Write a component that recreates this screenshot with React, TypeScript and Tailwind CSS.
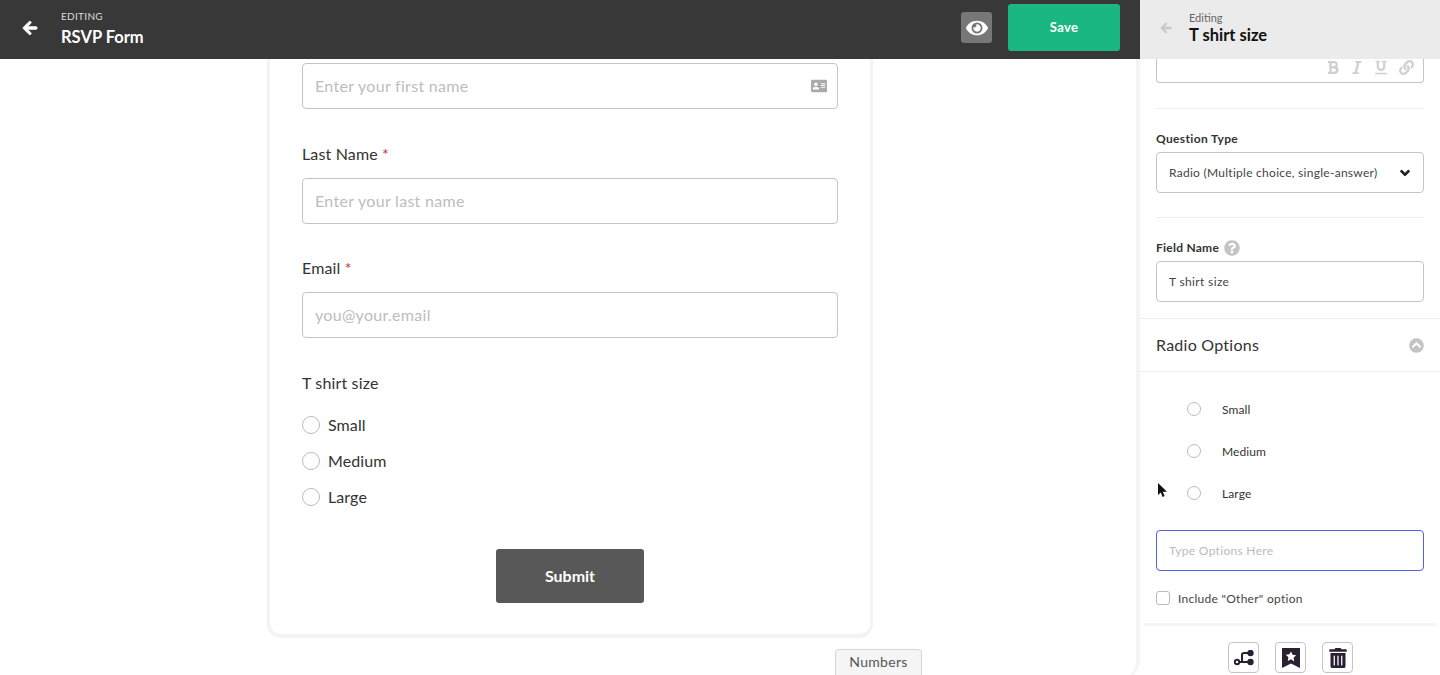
import { FaArrowLeft, FaEye, FaBold, FaItalic, FaUnderline, FaLink, FaChevronDown, FaQuestionCircle, FaChevronCircleUp, FaAddressCard, FaTrashAlt } from 'react-icons/fa';

function TextField({ label, required, placeholder, icon }: { label?: string; required?: boolean; placeholder: string; icon?: boolean }) {
  return (
    <div>
      {label && (
        <div className="mb-[14px] text-[16px] leading-[20px] tracking-[0.15px] text-[#333]">
          {label} {required && <span className="text-[#d0312d]">*</span>}
        </div>
      )}
      <div className="flex h-[46px] items-center justify-between rounded-[4px] border border-[#c4c4c4] pl-3 pr-[10px] text-[16px] tracking-[0.3px] text-[#bdbdbd]">
        <span>{placeholder}</span>
        {icon && <FaAddressCard className="h-[16px] w-[16px] text-[#aaa]" />}
      </div>
    </div>
  );
}

function Radio({ label }: { label: string }) {
  return (
    <div className="flex h-[36px] items-center gap-2 text-[16px] tracking-[0.1px] text-[#333]">
      <span className="h-[18px] w-[18px] rounded-full border border-[#bbb]" />
      {label}
    </div>
  );
}

function SideOption({ label }: { label: string }) {
  return (
    <div className="flex h-[42px] items-center pl-[31px] text-[12px] tracking-[0.1px] text-[#333]">
      <span className="mr-[21px] h-[14px] w-[14px] rounded-full border border-[#bbb]" />
      <span className="mt-[2px]">{label}</span>
    </div>
  );
}

function ToolButton({ children }: { children: React.ReactNode }) {
  return (
    <div className="flex h-[31px] w-[31px] items-center justify-center rounded-[4px] border border-[#c4c4c4] text-[#2a1f33]">
      {children}
    </div>
  );
}

export default function App() {
  return (
    <div className="relative flex h-[675px] w-[1440px] flex-col overflow-hidden bg-white font-['Lato',sans-serif]">
      <header className="flex h-[59px] shrink-0">
        <div className="flex w-[1140px] items-center bg-[#383838] pb-[4px] pr-[20px] text-white">
          <FaArrowLeft className="ml-[22px] h-[16px] w-[16px]" strokeWidth={30} />
          <div className="ml-[23px]">
            <div className="text-[10px] leading-[12px] tracking-[0.3px] text-[#ddd]">EDITING</div>
            <div className="mt-[6px] text-[16.5px] font-bold leading-[18px]">RSVP Form</div>
          </div>
          <div className="ml-auto flex h-[31px] w-[31px] items-center justify-center rounded-[3px] bg-[#777]">
            <FaEye className="h-[22px] w-[22px]" />
          </div>
          <div className="ml-[16px] flex h-[47px] w-[112px] items-center justify-center rounded-[3px] bg-[#1ab783] text-[13px] font-bold tracking-[0.3px]">
            Save
          </div>
        </div>
        <div className="flex w-[300px] items-center bg-[#ebebeb] pb-[4px]">
          <FaArrowLeft className="ml-[20px] h-[12px] w-[12px] text-[#c9c9c9]" strokeWidth={30} />
          <div className="ml-[17px]">
            <div className="text-[11px] leading-[13px] text-[#666]">Editing</div>
            <div className="mt-[2px] text-[16.5px] font-bold leading-[19px] text-[#111]">T shirt size</div>
          </div>
        </div>
      </header>

      <div className="flex min-h-0 flex-1">
        <main className="h-[622px] w-[1140px] shrink-0 rounded-br-[22px] border-r-[4px] border-[#f5f5f5]">
          <div className="ml-[267px] h-[579px] w-[606px] rounded-b-[14px] border-x-[3px] border-b-[4px] border-[#f3f3f3] px-[32px] pt-[4px]">
            <TextField placeholder="Enter your first name" icon />
            <div className="mt-[35px]">
              <TextField label="Last Name" required placeholder="Enter your last name" />
            </div>
            <div className="mt-[34px]">
              <TextField label="Email" required placeholder="you@your.email" />
            </div>
            <div className="mt-[35px] text-[16px] leading-[20px] tracking-[0.15px] text-[#333]">T shirt size</div>
            <div className="mt-[14px]">
              <Radio label="Small" />
              <Radio label="Medium" />
              <Radio label="Large" />
            </div>
            <div className="mt-[34px] flex justify-center">
              <div className="flex h-[54px] w-[148px] items-center justify-center rounded-[3px] bg-[#585858] text-[16px] font-bold text-white">
                Submit
              </div>
            </div>
          </div>
          <div className="ml-[835px] mt-[11px] flex h-[30px] w-[87px] justify-center rounded-t-[4px] border border-[#d5d5d5] bg-[#f5f5f5] pt-[3px] text-[14px] leading-[18px] tracking-[0.3px] text-[#555]">
            Numbers
          </div>
        </main>

        <aside className="w-[300px] shrink-0 bg-white">
          <div className="px-4">
            <div className="flex h-[24px] items-start justify-end gap-[12px] rounded-b-[4px] border-x border-b border-[#c4c4c4] pr-[9px] pt-[1px] text-[#d0d0d0]">
              <FaBold className="h-[15px] w-[12px]" />
              <FaItalic className="h-[15px] w-[12px]" />
              <FaUnderline className="h-[15px] w-[12px]" />
              <FaLink className="h-[15px] w-[15px]" />
            </div>
            <div className="mt-[25px] border-t border-[#eee]" />
            <div className="mt-[23px] text-[12px] font-bold leading-[14px] tracking-[0.35px] text-[#333]">Question Type</div>
            <div className="mt-[6px] flex h-[41px] items-center justify-between rounded-[4px] border border-[#c4c4c4] pl-3 pr-[13px] text-[12px] tracking-[0.27px] text-[#444]">
              Radio (Multiple choice, single-answer)
              <FaChevronDown className="h-[10px] w-[10px] text-[#222]" strokeWidth={60} />
            </div>
            <div className="mt-[24px] border-t border-[#eee]" />
            <div className="mt-[23px] flex h-[14px] items-center gap-[5px] text-[12px] font-bold tracking-[0.25px] text-[#333]">
              Field Name
              <FaQuestionCircle className="h-[16px] w-[16px] text-[#c4c4c4]" />
            </div>
            <div className="mt-[6px] flex h-[41px] items-center rounded-[4px] border border-[#c4c4c4] px-3 text-[12px] tracking-[0.35px] text-[#444]">
              T shirt size
            </div>
          </div>
          <div className="mt-[16px] flex h-[54px] items-center justify-between border-y border-[#eee] px-4 text-[16px] tracking-[0.25px] text-[#333]">
            Radio Options
            <FaChevronCircleUp className="h-[15px] w-[15px] text-[#c4c4c4]" />
          </div>
          <div className="px-4 pt-[16px]">
            <SideOption label="Small" />
            <SideOption label="Medium" />
            <SideOption label="Large" />
            <div className="mt-[16px] flex h-[41px] items-center rounded-[4px] border border-[#4a63e7] px-3 text-[12px] tracking-[0.3px] text-[#bbb]">
              Type Options Here
            </div>
            <div className="mt-[20px] flex h-[14px] items-center gap-[8px] text-[12px] tracking-[0.27px] text-[#444]">
              <span className="h-[14px] w-[14px] rounded-[3px] border border-[#bbb]" />
              <span className="mt-[2px]">Include "Other" option</span>
            </div>
          </div>
          <div className="mx-[4px] mt-[18px] border-t-[3px] border-[#f5f5f5]" />
          <div className="ml-[88px] mt-[16px] flex gap-[16px]">
            <ToolButton>
              <svg viewBox="0 0 20 16" className="h-[16px] w-[20px]" fill="none" stroke="currentColor" strokeWidth="2">
                <circle cx="3" cy="12" r="2.2" />
                <circle cx="16.5" cy="12" r="2.2" fill="currentColor" />
                <circle cx="16.5" cy="3" r="2.2" fill="currentColor" />
                <path d="M5 12h10M8 12V5a2 2 0 0 1 2-2h5" />
              </svg>
            </ToolButton>
            <ToolButton>
              <svg viewBox="0 0 18 20" className="h-[20px] w-[18px]" fill="currentColor">
                <path d="M0 0h18v20l-9-4.5L0 20z" />
                <path fill="#fff" d="M9 3.5l1.6 3.3 3.6.5-2.6 2.5.6 3.6L9 11.2l-3.2 1.7.6-3.6-2.6-2.5 3.6-.5z" />
              </svg>
            </ToolButton>
            <ToolButton>
              <FaTrashAlt className="h-[20px] w-[18px]" />
            </ToolButton>
          </div>
        </aside>
      </div>

      {/* mouse pointer caught in the capture */}
      <svg viewBox="0 0 10 15" className="absolute left-[1158px] top-[483px] h-[15px] w-[10px]" fill="#111">
        <path d="M0 0v12l2.8-2.6L4.6 14l2-.9-1.8-4.4H9z" />
      </svg>
    </div>
  );
}
